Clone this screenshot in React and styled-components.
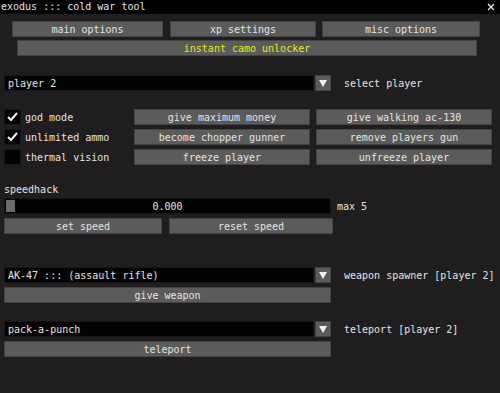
import React from 'react';
import styled, { createGlobalStyle } from 'styled-components';

const GlobalStyle = createGlobalStyle`
  html, body {
    margin: 0;
    padding: 0;
    background: #1f1d1e;
  }
  body {
    font-family: "DejaVu Sans Mono", "Liberation Mono", monospace;
    font-size: 10px;
    color: #e4e4e4;
  }
`;

const Window = styled.div`
  width: 500px;
  height: 393px;
  background: #1f1d1e;
  display: flex;
  flex-direction: column;
  overflow: hidden;
`;

const TitleBar = styled.div`
  height: 14px;
  background: #000;
  display: flex;
  align-items: center;
  justify-content: space-between;
  padding: 0 5px 0 1px;
  line-height: 14px;
`;

const CloseIcon = styled.svg`
  width: 8px;
  height: 8px;
  display: block;
`;

const Row = styled.div`
  display: flex;
  align-items: center;
  gap: ${(p) => p.$gap ?? 0}px;
  margin-top: ${(p) => p.$top ?? 0}px;
  padding-left: ${(p) => p.$left ?? 4}px;
  height: 16px;
`;

const Button = styled.div`
  box-sizing: border-box;
  width: ${(p) => p.$w}px;
  height: 16px;
  margin-left: ${(p) => p.$ml ?? 0}px;
  background: #5b5b5b;
  border: 1px solid #434343;
  color: ${(p) => (p.$yellow ? '#e8e81c' : '#e4e4e4')};
  display: flex;
  align-items: center;
  justify-content: center;
  white-space: pre;
  flex-shrink: 0;
`;

const ComboBox = styled.div`
  box-sizing: border-box;
  width: 310px;
  height: 16px;
  background: #030303;
  border: 1px solid #161616;
  display: flex;
  align-items: center;
  padding-left: 3px;
  white-space: pre;
  flex-shrink: 0;
`;

const ArrowBox = styled.div`
  box-sizing: border-box;
  width: 16px;
  height: 16px;
  margin-left: 1px;
  background: #5b5b5b;
  border: 1px solid #434343;
  display: flex;
  align-items: center;
  justify-content: center;
  flex-shrink: 0;
`;

const Label = styled.span`
  margin-left: ${(p) => p.$ml ?? 13}px;
  white-space: pre;
`;

const CheckBox = styled.div`
  box-sizing: border-box;
  width: 17px;
  height: 16px;
  background: #030303;
  border: 1px solid #161616;
  display: flex;
  align-items: center;
  justify-content: center;
  flex-shrink: 0;
`;

const CheckLabel = styled.span`
  width: 108px;
  margin-left: 4px;
  white-space: pre;
  flex-shrink: 0;
`;

const TextLine = styled.div`
  margin-top: ${(p) => p.$top ?? 0}px;
  padding-left: 4px;
  height: 12px;
  line-height: 12px;
`;

const Slider = styled.div`
  box-sizing: border-box;
  width: 327px;
  height: 16px;
  background: #030303;
  border: 1px solid #161616;
  display: flex;
  align-items: center;
  padding-left: 1px;
  flex-shrink: 0;
`;

const Grab = styled.div`
  width: 9px;
  height: 12px;
  background: #6b6b6b;
  flex-shrink: 0;
`;

const SliderValue = styled.span`
  flex: 1;
  text-align: center;
  padding-right: 10px;
`;

const ChevronDown = () => (
  <svg width="8" height="7" viewBox="0 0 8 7">
    <polygon points="0,0 8,0 4,7" fill="#f0f0f0" />
  </svg>
);

const Check = () => (
  <svg width="11" height="10" viewBox="0 0 11 10">
    <polyline points="1,5 4,8 10,1" fill="none" stroke="#f0f0f0" strokeWidth="2" />
  </svg>
);

function Combo({ value, label }) {
  return (
    <>
      <ComboBox>{value}</ComboBox>
      <ArrowBox>
        <ChevronDown />
      </ArrowBox>
      <Label>{label}</Label>
    </>
  );
}

function CheckRow({ checked, label, top, left, right }) {
  return (
    <Row $top={top}>
      <CheckBox>{checked && <Check />}</CheckBox>
      <CheckLabel>{label}</CheckLabel>
      <Button $w={176} $ml={1}>{left}</Button>
      <Button $w={176} $ml={6}>{right}</Button>
    </Row>
  );
}

export default function App() {
  return (
    <Window>
      <GlobalStyle />
      <TitleBar>
        <span>exodus ::: cold war tool</span>
        <CloseIcon viewBox="0 0 8 8">
          <path d="M1 1 L7 7 M7 1 L1 7" stroke="#e8e8e8" strokeWidth="1.4" />
        </CloseIcon>
      </TitleBar>

      <Row $top={7} $left={12}>
        <Button $w={151}>main options</Button>
        <Button $w={146} $ml={7}>xp settings</Button>
        <Button $w={158} $ml={6}>misc options</Button>
      </Row>
      <Row $top={3} $left={17}>
        <Button $w={460} $yellow>instant camo unlocker</Button>
      </Row>

      <Row $top={19}>
        <Combo value="player 2" label="select player" />
      </Row>

      <CheckRow top={18} checked label="god mode" left="give maximum money" right="give walking ac-130" />
      <CheckRow top={4} checked label="unlimited ammo" left="become chopper gunner" right="remove players gun" />
      <CheckRow top={4} label="thermal vision" left="freeze player" right="unfreeze player" />

      <TextLine $top={19}>speedhack</TextLine>
      <Row $top={2}>
        <Slider>
          <Grab />
          <SliderValue>0.000</SliderValue>
        </Slider>
        <Label $ml={6}>max 5</Label>
      </Row>
      <Row $top={4}>
        <Button $w={158}>set speed</Button>
        <Button $w={164} $ml={7}>reset speed</Button>
      </Row>

      <Row $top={33}>
        <Combo value="AK-47 ::: (assault rifle)" label="weapon spawner [player 2]" />
      </Row>
      <Row $top={4}>
        <Button $w={327}>give weapon</Button>
      </Row>

      <Row $top={18}>
        <Combo value="pack-a-punch" label="teleport [player 2]" />
      </Row>
      <Row $top={4}>
        <Button $w={327}>teleport</Button>
      </Row>
    </Window>
  );
}
